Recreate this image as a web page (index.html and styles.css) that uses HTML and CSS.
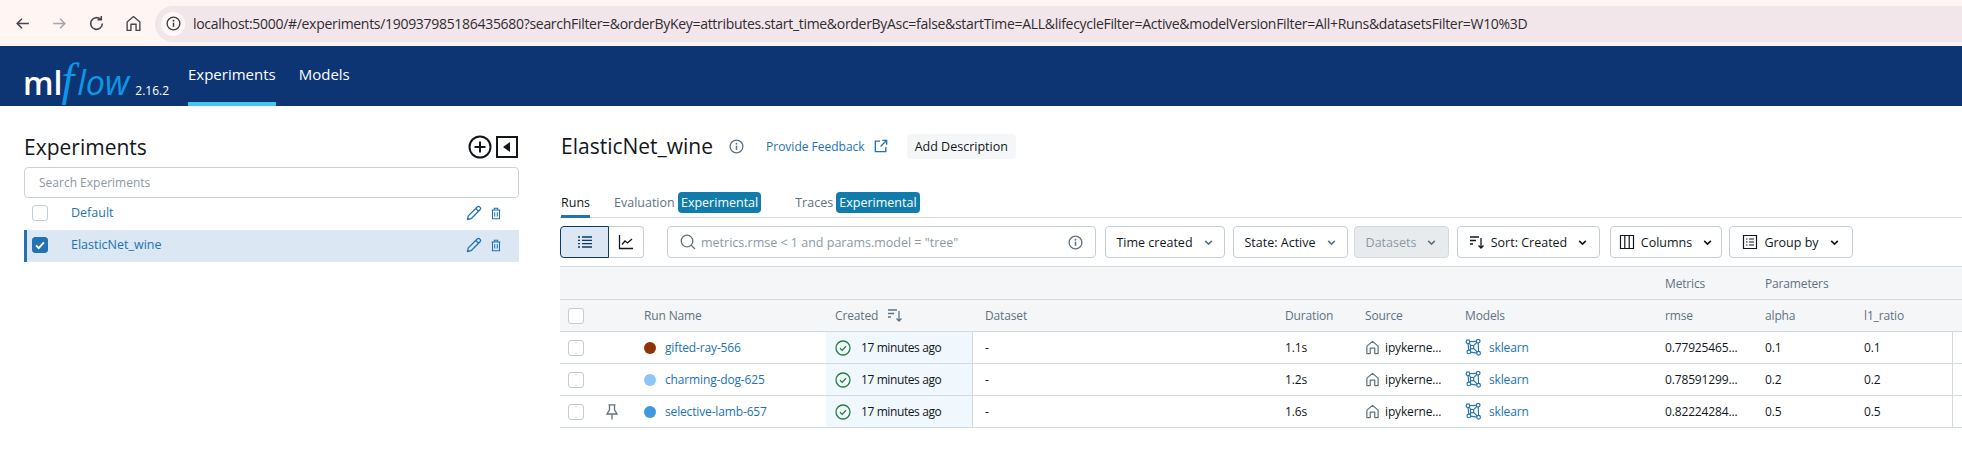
FILE: index.html
```html
<!DOCTYPE html>
<html lang="en">
<head>
  <meta charset="UTF-8" />
  <title>MLflow</title>
  <link rel="stylesheet" href="styles.css">
</head>
<body>

  <svg class="defs" width="0" height="0">
    <symbol id="i-home" viewBox="0 0 16 16"><path d="M2 14.500V6.500L8 1.500l6 5v8h-3.600V8.700H5.600v5.800z" fill="none" stroke="currentColor" stroke-width="1.300" stroke-linejoin="round"/></symbol>
    <symbol id="i-info" viewBox="0 0 16 16"><circle cx="8" cy="8" r="6.800" fill="none" stroke="currentColor" stroke-width="1.400"/><circle cx="8" cy="5" r="1" fill="currentColor"/><path d="M8 7.200v4.400" stroke="currentColor" stroke-width="1.600"/></symbol>
    <symbol id="i-pencil" viewBox="0 0 16 16"><path d="M1.500 14.500l.8-3.600L11.200 2a1.700 1.700 0 0 1 2.400 0l.4.400a1.700 1.700 0 0 1 0 2.400L5.100 13.700zM9.800 3.400l2.800 2.800" fill="none" stroke="currentColor" stroke-width="1.300" stroke-linejoin="round"/></symbol>
    <symbol id="i-trash" viewBox="0 0 16 16"><path d="M3 4.500h10M6 4.500V2.500h4v2M4 4.500v10h8v-10M6.500 7v5M9.500 7v5" fill="none" stroke="currentColor" stroke-width="1.200"/></symbol>
    <symbol id="i-chev" viewBox="0 0 10 10"><path d="M2 3.500l3 3 3-3" fill="none" stroke="currentColor" stroke-width="1.400"/></symbol>
    <symbol id="i-sort" viewBox="0 0 16 16"><path d="M1 3h9M1 6.500h6M1 10h3M12 4v10M9.500 11.500L12 14l2.500-2.500" fill="none" stroke="currentColor" stroke-width="1.300"/></symbol>
    <symbol id="i-check" viewBox="0 0 16 16"><circle cx="8" cy="8" r="7" fill="none" stroke="currentColor" stroke-width="1.300"/><path d="M5 8.200l2.200 2.200L11 6.300" fill="none" stroke="currentColor" stroke-width="1.300"/></symbol>
    <symbol id="i-model" viewBox="0 0 16 16"><g fill="none" stroke="currentColor" stroke-width="1.100"><circle cx="2.800" cy="2.600" r="1.700"/><circle cx="12.400" cy="2" r="1.700"/><circle cx="6.600" cy="7.600" r="1.700"/><circle cx="3.600" cy="12.200" r="1.700"/><circle cx="12.800" cy="13.400" r="1.700"/><path d="M4.500 2.500l6.200-.4M3.900 4l1.700 2.300M11.200 3.200L7.900 6.400M2.900 4.300l.6 6.200M5.700 9l-1.200 1.700M7.900 8.700l3.700 3.600M12.400 3.700l.4 8M5.300 12.400l5.800.9"/></g></symbol>
  </svg>

  <div class="browser-bar">
    <div class="browser-nav">
      <svg class="nav-icon" viewBox="0 0 16 16"><path d="M14 8H3M7.500 3.500L3 8l4.500 4.500" fill="none" stroke="currentColor" stroke-width="1.500"/></svg>
      <svg class="nav-icon muted" viewBox="0 0 16 16"><path d="M2 8h11M8.500 3.500L13 8l-4.500 4.500" fill="none" stroke="currentColor" stroke-width="1.500"/></svg>
      <svg class="nav-icon" viewBox="0 0 16 16"><path d="M13.500 8a5.500 5.500 0 1 1-1.600-3.900M12.500 1v3.500H9" fill="none" stroke="currentColor" stroke-width="1.500"/></svg>
      <svg class="nav-icon"><use href="#i-home"/></svg>
    </div>
    <div class="omnibox">
      <span class="site-info"><svg class="site-icon"><use href="#i-info"/></svg></span>
      <span class="url">localhost:5000/#/experiments/190937985186435680?searchFilter=&amp;orderByKey=attributes.start_time&amp;orderByAsc=false&amp;startTime=ALL&amp;lifecycleFilter=Active&amp;modelVersionFilter=All+Runs&amp;datasetsFilter=W10%3D</span>
    </div>
  </div>

  <header class="topnav">
    <div class="logo"><span class="logo-ml">ml</span><span class="logo-f">f</span><span class="logo-flow">low</span><span class="version">2.16.2</span></div>
    <a class="topnav-link active">Experiments</a>
    <a class="topnav-link">Models</a>
  </header>

  <div class="page">
    <aside class="sidebar">
      <div class="sidebar-head">
        <h1>Experiments</h1>
        <svg class="side-action" viewBox="0 0 24 24"><circle cx="12" cy="12" r="10.500" fill="none" stroke="currentColor" stroke-width="2"/><path d="M12 6.500v11M6.500 12h11" stroke="currentColor" stroke-width="2"/></svg>
        <svg class="side-action" viewBox="0 0 24 24"><rect x="2" y="2" width="20" height="20" fill="none" stroke="currentColor" stroke-width="2"/><path d="M15 7v10l-7-5z" fill="currentColor"/></svg>
      </div>
      <div class="side-search">Search Experiments</div>
      <div class="exp-row">
        <span class="box"></span>
        <a class="exp-name">Default</a>
        <svg class="exp-edit"><use href="#i-pencil"/></svg>
        <svg class="exp-trash"><use href="#i-trash"/></svg>
      </div>
      <div class="exp-row selected">
        <span class="box checked"><svg viewBox="0 0 16 16"><path d="M3.500 8.500l3 3 6-6.500" fill="none" stroke="#fff" stroke-width="2.200"/></svg></span>
        <a class="exp-name">ElasticNet_wine</a>
        <svg class="exp-edit"><use href="#i-pencil"/></svg>
        <svg class="exp-trash"><use href="#i-trash"/></svg>
      </div>
    </aside>

    <main class="content">
      <div class="title-row">
        <h2>ElasticNet_wine</h2>
        <svg class="title-info"><use href="#i-info"/></svg>
        <a class="feedback">Provide Feedback
          <svg viewBox="0 0 16 16"><path d="M7 2.500H1.500v12h12V9M9.500 1.500h5v5M14.500 1.500L7.500 8.500" fill="none" stroke="currentColor" stroke-width="1.500"/></svg>
        </a>
        <button class="add-desc">Add Description</button>
      </div>

      <div class="tabs">
        <span class="tab active">Runs</span>
        <span class="tab">Evaluation <b class="badge">Experimental</b></span>
        <span class="tab">Traces <b class="badge">Experimental</b></span>
      </div>

      <div class="toolbar">
        <div class="view-switch">
          <span class="view-btn on"><svg viewBox="0 0 16 16"><path d="M1 3h2M5 3h10M1 6.300h2M5 6.300h10M1 9.700h2M5 9.700h10M1 13h2M5 13h10" stroke="currentColor" stroke-width="1.300"/></svg></span>
          <span class="view-btn"><svg viewBox="0 0 16 16"><path d="M1.500 1v13.500H15M4 10.500l3-3.500 2.500 2L14 5" fill="none" stroke="currentColor" stroke-width="1.300"/></svg></span>
        </div>
        <div class="run-search">
          <svg class="lens" viewBox="0 0 16 16"><circle cx="7" cy="7" r="5.800" fill="none" stroke="currentColor" stroke-width="1.300"/><path d="M11 11l4 4" stroke="currentColor" stroke-width="1.300"/></svg>
          <span class="query">metrics.rmse &lt; 1 and params.model = "tree"</span>
          <svg class="query-info"><use href="#i-info"/></svg>
        </div>
        <button class="drop w-time">Time created <svg class="chev soft"><use href="#i-chev"/></svg></button>
        <button class="drop w-state">State: Active <svg class="chev soft"><use href="#i-chev"/></svg></button>
        <button class="drop w-data off">Datasets <svg class="chev soft"><use href="#i-chev"/></svg></button>
        <button class="drop w-sort"><svg class="drop-icon"><use href="#i-sort"/></svg>Sort: Created <svg class="chev"><use href="#i-chev"/></svg></button>
        <button class="drop w-cols"><svg class="drop-icon" viewBox="0 0 16 16"><path d="M1.500 1.500h13v13h-13zM5.800 1.500v13M10.200 1.500v13" fill="none" stroke="currentColor" stroke-width="1.200"/></svg>Columns <svg class="chev"><use href="#i-chev"/></svg></button>
        <button class="drop w-group"><svg class="drop-icon" viewBox="0 0 16 16"><path d="M1.500 1.500h13v13h-13zM4 5h1.500M7 5h5M4 8h1.500M7 8h5M4 11h1.500M7 11h5" fill="none" stroke="currentColor" stroke-width="1.200"/></svg>Group by <svg class="chev"><use href="#i-chev"/></svg></button>
      </div>

      <div class="table">
        <div class="grid band">
          <span class="col-metric">Metrics</span>
          <span class="col-param">Parameters</span>
        </div>
        <div class="grid head">
          <span class="box"></span>
          <span></span>
          <span>Run Name</span>
          <span>Created <svg class="head-sort"><use href="#i-sort"/></svg></span>
          <span>Dataset</span>
          <span>Duration</span>
          <span>Source</span>
          <span>Models</span>
          <span>rmse</span>
          <span>alpha</span>
          <span>l1_ratio</span>
        </div>

        <div class="grid row">
          <span class="box"></span>
          <span></span>
          <span class="run"><i class="dot c-brown"></i><a>gifted-ray-566</a></span>
          <span class="created"><svg><use href="#i-check"/></svg>17 minutes ago</span>
          <span>-</span>
          <span>1.1s</span>
          <span class="source"><svg><use href="#i-home"/></svg>ipykerne...</span>
          <span class="model"><svg><use href="#i-model"/></svg><a>sklearn</a></span>
          <span>0.77925465...</span>
          <span>0.1</span>
          <span class="last">0.1</span>
        </div>
        <div class="grid row">
          <span class="box"></span>
          <span></span>
          <span class="run"><i class="dot c-sky"></i><a>charming-dog-625</a></span>
          <span class="created"><svg><use href="#i-check"/></svg>17 minutes ago</span>
          <span>-</span>
          <span>1.2s</span>
          <span class="source"><svg><use href="#i-home"/></svg>ipykerne...</span>
          <span class="model"><svg><use href="#i-model"/></svg><a>sklearn</a></span>
          <span>0.78591299...</span>
          <span>0.2</span>
          <span class="last">0.2</span>
        </div>
        <div class="grid row">
          <span class="box"></span>
          <svg class="pin" viewBox="0 0 12 16"><path d="M2.500.8h7M3.500.8v5L1 10h10L8.500 5.800V.8M6 10v5.500" fill="none" stroke="currentColor" stroke-width="1.300"/></svg>
          <span class="run"><i class="dot c-blue"></i><a>selective-lamb-657</a></span>
          <span class="created"><svg><use href="#i-check"/></svg>17 minutes ago</span>
          <span>-</span>
          <span>1.6s</span>
          <span class="source"><svg><use href="#i-home"/></svg>ipykerne...</span>
          <span class="model"><svg><use href="#i-model"/></svg><a>sklearn</a></span>
          <span>0.82224284...</span>
          <span>0.5</span>
          <span class="last">0.5</span>
        </div>
      </div>
    </main>
  </div>

</body>
</html>
```

FILE: styles.css
```css
* { box-sizing: border-box; }
html, body { height: 100%; }
body {
  margin: 0;
  font-family: 'Open Sans', sans-serif;
  font-size: 12.5px;
  color: #11171c;
  background: #fff;
  overflow: hidden;
}
a { color: #2272b4; }
svg { display: block; flex: none; }
.defs { position: absolute; }

/* browser chrome */
.browser-bar {
  height: 46px;
  background: #fff5f3;
  display: flex;
  align-items: center;
  padding-left: 14px;
}
.browser-nav {
  display: flex;
  gap: 20px;
  width: 141px;
  color: #4a4650;
}
.nav-icon { width: 17px; height: 17px; }
.nav-icon.muted { color: #a9a5ab; }
.omnibox {
  flex: 1;
  height: 36px;
  margin-top: 1px;
  background: #f3e6ea;
  border-radius: 18px 0 0 18px;
  display: flex;
  align-items: center;
  padding-left: 6px;
  min-width: 0;
}
.site-info {
  width: 24px;
  height: 24px;
  border-radius: 50%;
  background: #fff8f6;
  display: flex;
  align-items: center;
  justify-content: center;
  margin-right: 8px;
}
.site-icon { width: 15px; height: 15px; color: #3c3a40; }
.url { font-size: 14px; letter-spacing: -0.3px; color: #2f2d33; white-space: nowrap; }

/* top nav */
.topnav {
  height: 60px;
  background: #0d3574;
  display: flex;
  padding-left: 23px;
}
.logo { width: 165px; display: flex; align-items: baseline; padding-top: 7px; }
.logo-ml { font-size: 32px; font-weight: 600; color: #fff; }
.logo-f { font: italic 46px 'Liberation Serif', serif; color: #0b98e6; margin: 0 3px 0 -1px; }
.logo-flow { font-size: 34px; font-style: italic; color: #0b98e6; }
.version { font-size: 12px; color: #fff; margin-left: 6px; }
.topnav-link {
  height: 60px;
  line-height: 56px;
  margin-right: 23px;
  color: #fff;
  font-size: 15px;
  border-bottom: 4px solid transparent;
}
.topnav-link.active { border-bottom-color: #43c9ed; }

.page { display: flex; }

/* sidebar */
.sidebar { width: 560px; padding: 20px 41px 0 24px; flex: none; }
.sidebar-head { display: flex; align-items: center; height: 41px; gap: 3px; }
.sidebar-head h1 { flex: 1; margin: 0; font-size: 21px; font-weight: 500; }
.side-action { width: 24px; height: 24px; color: #11171c; }
.side-search {
  height: 31px;
  border: 1px solid #c7d2dc;
  border-radius: 4px;
  padding-left: 14px;
  line-height: 29px;
  color: #8d98a3;
  font-size: 12px;
}
.exp-row {
  height: 32px;
  display: flex;
  align-items: center;
  padding: 0 16px 3px 5px;
  border-left: 3px solid transparent;
}
.exp-row.selected { background: #dbe7f3; border-left-color: #2272b4; }
.exp-name { flex: 1; margin-left: 23px; }
.exp-edit { width: 16px; height: 16px; color: #2272b4; margin-right: 7px; }
.exp-trash { width: 14px; height: 14px; color: #2272b4; }
.box {
  display: block;
  width: 16px;
  height: 16px;
  border: 1px solid #c3ced8;
  border-radius: 3px;
  background: #fff;
}
.box.checked { background: #2272b4; border-color: #2272b4; }

/* main */
.content { flex: 1; min-width: 0; }
.title-row { display: flex; align-items: center; height: 40px; margin-top: 20px; padding-left: 1px; }
.title-row h2 { margin: 0; font-size: 21px; font-weight: 500; }
.title-info { width: 15px; height: 15px; margin-left: 16px; color: #5f7281; }
.feedback { display: flex; align-items: center; gap: 9px; margin-left: 22px; font-size: 12px; }
.feedback svg { width: 14px; height: 14px; }
.add-desc {
  margin-left: 19px;
  height: 25px;
  padding: 0 8px;
  border: 0;
  border-radius: 4px;
  background: #f5f6f7;
  font: 12.500px 'Open Sans', sans-serif;
  color: #11171c;
}
.tabs {
  display: flex;
  gap: 34px;
  height: 26px;
  margin-top: 26px;
  padding-left: 1px;
  border-bottom: 1px solid #d1d9e1;
  align-items: flex-start;
}
.tab { color: #5f7281; height: 26px; line-height: 22px; }
.tab.active { color: #11171c; border-bottom: 3px solid #2272b4; margin-right: -10px; }
.badge {
  font-weight: 400;
  font-size: 12.500px;
  color: #fff;
  background: #0f7cab;
  border-radius: 4px;
  padding: 2px 3px;
}

.toolbar { display: flex; align-items: center; margin-top: 8px; height: 32px; }
.view-switch { display: flex; width: 84px; height: 32px; margin-right: 23px; }
.view-btn {
  flex: 1;
  display: flex;
  align-items: center;
  justify-content: center;
  border: 1px solid #c3ced8;
  border-radius: 0 4px 4px 0;
  border-left: 0;
}
.view-btn svg { width: 16px; height: 16px; }
.view-btn.on {
  flex: none;
  width: 49px;
  background: #dbe7f3;
  border: 1px solid #0b3a66;
  border-radius: 4px 0 0 4px;
  color: #0b3a66;
}
.run-search {
  width: 429px;
  height: 32px;
  border: 1px solid #c3ced8;
  border-radius: 4px;
  display: flex;
  align-items: center;
  padding: 0 12px;
  margin-right: 9px;
  color: #5f7281;
}
.lens { width: 16px; height: 16px; }
.query { flex: 1; margin-left: 5px; color: #8d98a3; }
.query-info { width: 15px; height: 15px; }
.drop {
  height: 32px;
  border: 1px solid #c3ced8;
  border-radius: 4px;
  background: #fff;
  font: 12.500px 'Open Sans', sans-serif;
  color: #11171c;
  display: flex;
  align-items: center;
  justify-content: center;
  gap: 6px;
  padding: 0;
  margin-right: 8px;
}
.drop.off { background: #e8ebee; color: #8d98a3; border-color: #d1d9e1; }
.drop-icon { width: 16px; height: 16px; }
.chev { width: 11px; height: 11px; margin-left: 4px; }
.chev.soft { color: #5f7281; }
.w-time { width: 120px; }
.w-state { width: 115px; margin-right: 6px; }
.w-data { width: 95px; }
.w-sort { width: 143px; margin-right: 10px; }
.w-cols { width: 112px; margin-right: 7px; }
.w-group { width: 124px; }

/* runs table */
.table { margin-top: 8px; font-size: 12px; letter-spacing: -0.15px; }
.grid {
  display: grid;
  grid-template-columns: 42px 34px 191px 150px 300px 80px 100px 200px 100px 99px 1fr;
  align-items: center;
  padding-left: 8px;
  border-bottom: 1px solid #d1d9e1;
  height: 32px;
}
.band, .head { background: #f5f6f7; color: #5f7281; }
.band { border-top: 1px solid #d1d9e1; height: 34px; }
.col-metric { grid-column: 9; }
.col-param { grid-column: 10; }
.row { color: #11171c; }
.run, .source, .model, .created { display: flex; align-items: center; }
.dot { width: 12px; height: 12px; border-radius: 50%; margin-right: 9px; }
.c-brown { background: #8f3209; }
.c-sky { background: #8cc4fb; }
.c-blue { background: #3f97e0; }
.head-sort { display: inline-block; vertical-align: -3px; width: 16px; height: 16px; margin-left: 6px; }
.created {
  background: #f0f7fd;
  border-right: 1px solid #d1d9e1;
  height: 31px;
  margin: 0 12px 0 -9px;
  padding-left: 9px;
  gap: 10px;
  letter-spacing: -0.4px;
}
.created svg { width: 16px; height: 16px; color: #277c43; }
.source svg { width: 15px; height: 15px; color: #5f7281; margin-right: 5px; }
.model svg { width: 17px; height: 17px; color: #2272b4; margin-right: 7px; }
.pin { width: 12px; height: 16px; color: #5f7281; margin-left: -4px; }
.last { width: 89px; height: 31px; line-height: 31px; border-right: 1px solid #d1d9e1; }
```
